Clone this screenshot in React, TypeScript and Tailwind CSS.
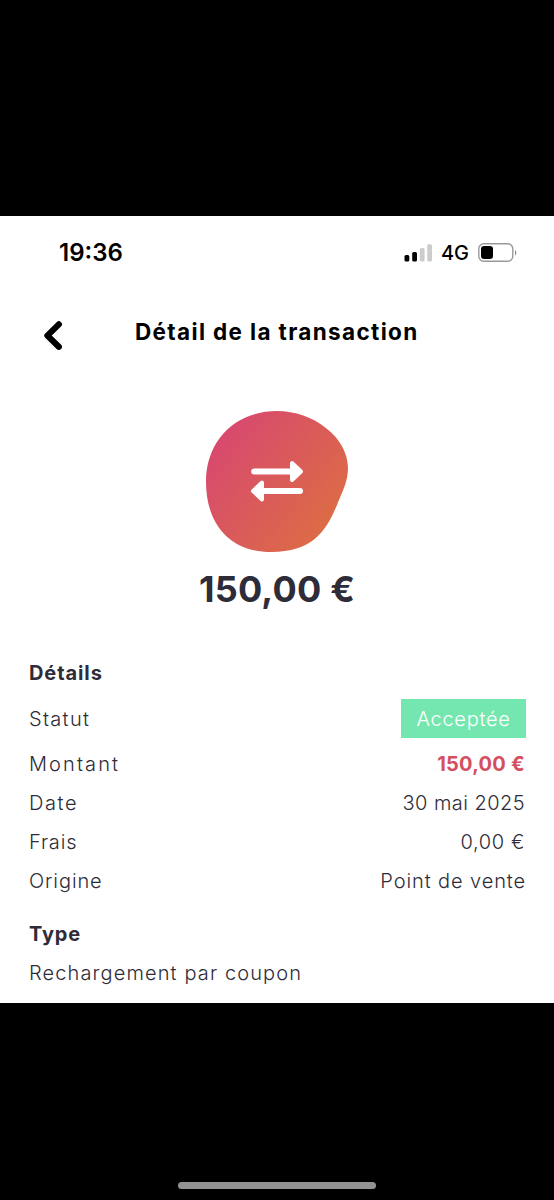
import type { ReactNode } from 'react';

function StatusBar() {
  return (
    <div className="flex h-[74px] items-center justify-between pl-[59px] pr-[37px] text-black">
      <span className="text-[24px] leading-none font-semibold">19:36</span>
      <div className="flex items-center">
        <svg width="28" height="18" viewBox="0 0 28 18" className="mr-[9px]">
          <rect x="0.5" y="11" width="4.8" height="6.6" rx="1.5" fill="#000" />
          <rect x="8.2" y="8" width="4.8" height="9.6" rx="1.5" fill="#000" />
          <rect x="15.8" y="4" width="4.8" height="13.6" rx="1.5" fill="#ccc" />
          <rect x="23.2" y="0.3" width="4.8" height="17.3" rx="1.5" fill="#ccc" />
        </svg>
        <span className="text-[20px] leading-none font-medium">4G</span>
        <svg width="39" height="20" viewBox="0 0 39 20" className="ml-[9px]">
          <rect x="0.8" y="0.8" width="34" height="17.4" rx="5" fill="none" stroke="#999" strokeWidth="1.4" />
          <rect x="3" y="3" width="12" height="13" rx="3" fill="#000" />
          <path d="M37 7c1.7.8 1.7 4.6 0 5.4z" fill="#888" />
        </svg>
      </div>
    </div>
  );
}

function Row({ label, children }: { label: ReactNode; children?: ReactNode }) {
  return (
    <div className="flex h-[39px] items-center justify-between whitespace-nowrap">
      {label}
      {children}
    </div>
  );
}

export default function App() {
  return (
    <main className="flex h-[1200px] w-[554px] flex-col bg-black pt-[216px] font-['Inter',sans-serif] text-[#2e2c38]">
      <section className="h-[787px] overflow-hidden bg-white">
        <StatusBar />

        {/* Header */}
        <header className="flex h-[85px] items-center pl-[43px]">
          <svg width="19" height="30" viewBox="0 0 19 30" className="mt-[6px]">
            <path d="M15.8 3.4 4.4 14.6 15.8 25.8" fill="none" stroke="#000" strokeWidth="6.2" strokeLinecap="round" strokeLinejoin="round" />
          </svg>
          <h1 className="ml-[73px] text-[22.5px] leading-none font-bold tracking-[1.35px] whitespace-nowrap text-black">
            Détail de la transaction
          </h1>
        </header>

        {/* Amount */}
        <div className="flex flex-col items-center pt-[35px]">
          <svg width="144" height="143" viewBox="0 0 144 143">
            <defs>
              <linearGradient id="blob" x1="0.1" y1="0.2" x2="0.9" y2="0.8">
                <stop offset="0" stopColor="#d84a6e" />
                <stop offset="1" stopColor="#dc6c45" />
              </linearGradient>
            </defs>
            <path
              d="M72 1C108 1 143 27 143 58C143 72 137 82 132 95C121 121 108 142 66 142C23 142 1 112 1 72C1 29 32 1 72 1Z"
              fill="url(#blob)"
            />
            <g fill="#fff" stroke="#fff" strokeLinejoin="round">
              <path d="M49.2 61.5H92" strokeWidth="6" strokeLinecap="round" />
              <path d="M87 53V70L96 61.5Z" strokeWidth="4" />
              <path d="M95 81H56" strokeWidth="6" strokeLinecap="round" />
              <path d="M57 72.5V89.5L48 81Z" strokeWidth="4" />
            </g>
          </svg>
          <p className="mt-[18px] text-[36px] leading-[36px] font-bold tracking-[0.2px]">150,00 €</p>
        </div>

        {/* Details */}
        <div className="px-[29px] pt-[46px] text-[20px] leading-none font-light">
          <Row label={<h2 className="font-bold tracking-[0.9px]">Détails</h2>} />
          <div className="pt-[7px] pb-[6px]">
            <Row label={<span className="tracking-[1.3px]">Statut</span>}>
              <span className="-mr-px flex h-[39px] w-[125px] items-center justify-center bg-[#74e7b0] tracking-[0.7px] text-white">
                Acceptée
              </span>
            </Row>
          </div>
          <Row label={<span className="tracking-[2.1px]">Montant</span>}>
            <span className="font-bold tracking-[0.25px] text-[#d4505f]">150,00 €</span>
          </Row>
          <Row label={<span className="tracking-[1.6px]">Date</span>}>
            <span className="tracking-[0.45px]">30 mai 2025</span>
          </Row>
          <Row label={<span className="tracking-[0.8px]">Frais</span>}>
            <span className="tracking-[0.6px]">0,00 €</span>
          </Row>
          <Row label={<span className="tracking-[0.9px]">Origine</span>}>
            <span className="-mr-px tracking-[0.9px]">Point de vente</span>
          </Row>
          <div className="pt-[14px]">
            <Row label={<h2 className="font-bold tracking-[0.8px]">Type</h2>} />
            <Row label={<span className="tracking-[1.12px]">Rechargement par coupon</span>} />
          </div>
        </div>
      </section>

      {/* Home indicator */}
      <div className="mx-auto mt-auto mb-[11px] h-[7px] w-[198px] rounded-full bg-[#929292]" />
    </main>
  );
}
